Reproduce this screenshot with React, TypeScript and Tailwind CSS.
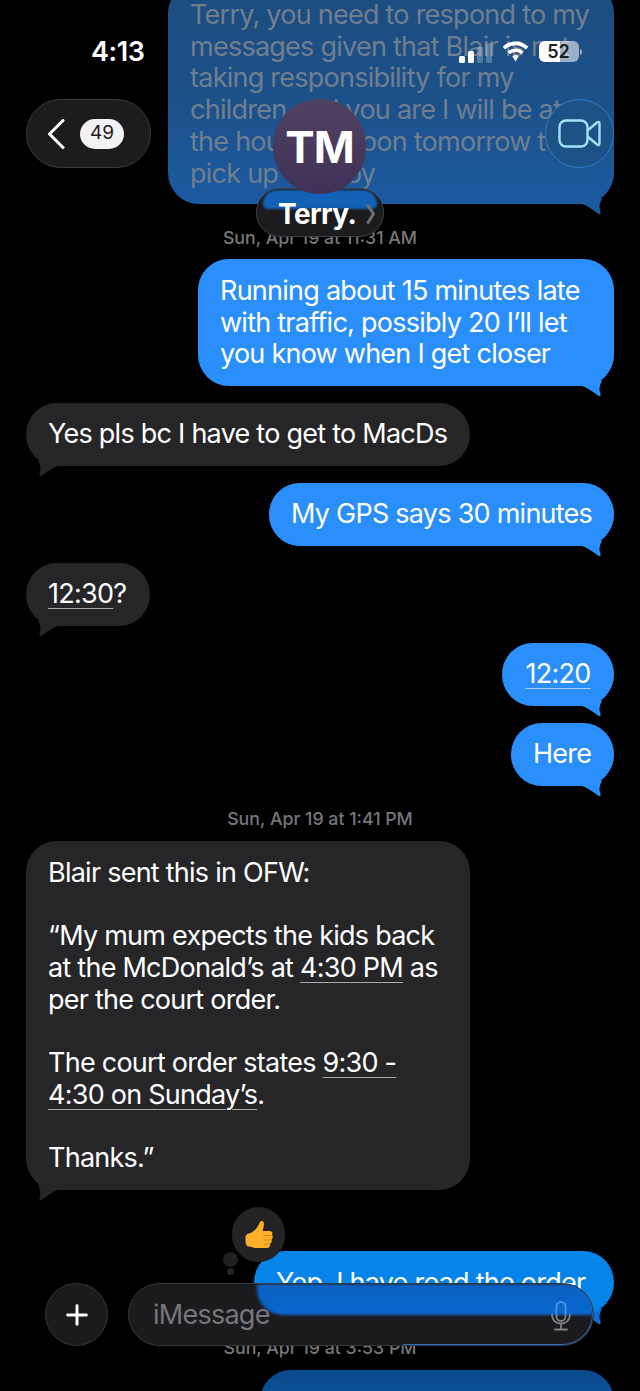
import type { ReactNode } from 'react'
import { Plus } from 'lucide-react'

const BLUE = '#2b8ffb'
const GRAY = '#262629'

function Tail({ side, color }: { side: 'left' | 'right'; color: string }) {
  return (
    <svg
      width="40"
      height="22"
      viewBox="0 0 40 22"
      className={side === 'right' ? 'absolute right-0 bottom-[-11px]' : 'absolute left-0 bottom-[-11px] -scale-x-100'}
    >
      <path d="M4 8 L8 11 C14 13 19 17 24 20.5 Q27 22.5 26.5 19 C25 15 25 11 28 6 L20 2 Z" fill={color} />
    </svg>
  )
}

function Bubble({
  side,
  width,
  children,
  tailColor,
  className,
}: {
  side: 'left' | 'right'
  width: string
  children: ReactNode
  tailColor?: string
  className?: string
}) {
  const bg = side === 'right' ? 'bg-[#2b8ffb]' : 'bg-[#262629]'
  return (
    <div className={`relative ${width} ${side === 'right' ? 'self-end' : 'self-start'}`}>
      <Tail side={side} color={tailColor ?? (side === 'right' ? BLUE : GRAY)} />
      <div
        className={`relative whitespace-pre rounded-[31px] px-[22px] py-[15.75px] text-[27px] leading-[31.75px] tracking-[-0.75px] text-white ${className ?? bg}`}
      >
        {children}
      </div>
    </div>
  )
}

function Link({ children }: { children: ReactNode }) {
  return <span className="underline decoration-white/60 decoration-1 underline-offset-[5px]">{children}</span>
}

function Stamp({ children, className }: { children: ReactNode; className: string }) {
  return <p className={`text-center text-[17.75px] leading-[22px] font-medium text-[#77777b] ${className}`}>{children}</p>
}

function StatusBar() {
  return (
    <>
      <span className="absolute left-[91px] top-[36px] text-[27px] leading-[32px] font-semibold tracking-[-0.4px] text-white">
        4:13
      </span>
      <div className="absolute left-[459px] top-[41px] flex items-start gap-[10px]">
        <div className="mt-px flex h-[21px] items-end gap-[3.5px]">
          <span className="h-[7px] w-[5.5px] rounded-[1.5px] bg-white" />
          <span className="h-[12px] w-[5.5px] rounded-[1.5px] bg-white" />
          <span className="h-[16px] w-[5.5px] rounded-[1.5px] bg-white/25" />
          <span className="h-[20px] w-[5.5px] rounded-[1.5px] bg-white/25" />
        </div>
        <svg width="27" height="21" viewBox="0 0 27 21">
          <path
            d="M13.5 0.5C8.5 0.5 4 2.5 0.7 5.8L3.2 8.5C5.9 5.8 9.5 4.2 13.5 4.2C17.5 4.2 21.1 5.8 23.8 8.5L26.3 5.8C23 2.5 18.5 0.5 13.5 0.5Z"
            fill="white"
          />
          <path
            d="M13.5 7.4C10.4 7.4 7.6 8.6 5.6 10.7L8 13.2C9.5 11.8 11.4 11 13.5 11C15.6 11 17.5 11.8 19 13.2L21.4 10.7C19.4 8.6 16.6 7.4 13.5 7.4Z"
            fill="white"
          />
          <path d="M13.5 14C12.2 14 11.1 14.5 10.3 15.3L13.5 20.5L16.7 15.3C15.9 14.5 14.8 14 13.5 14Z" fill="white" />
        </svg>
        <div className="relative flex h-[21px] w-[40px] items-center justify-center overflow-hidden rounded-[6px] bg-white/55">
          <span className="absolute inset-y-0 left-0 w-[21px] bg-white" />
          <span className="relative text-[18px] leading-none font-semibold text-[#1d1d20]">52</span>
        </div>
      </div>
      <span className="absolute left-[580px] top-[49px] h-[6px] w-[2px] rounded-r-full bg-white/50" />
    </>
  )
}

function Header() {
  return (
    <>
      <StatusBar />
      <div className="absolute left-[26px] top-[99px] flex h-[69px] w-[125px] items-center gap-[15px] rounded-full border border-[#3a3a3c] bg-[#1c1c1e] pl-[20px]">
        <svg width="18" height="30" viewBox="0 0 18 30" fill="none">
          <path d="M16 1.5L2.5 15L16 28.5" stroke="white" strokeWidth="3" strokeLinecap="round" strokeLinejoin="round" />
        </svg>
        <span className="flex h-[30px] w-[44px] items-center justify-center rounded-full bg-[#f2f2f4] text-[19px] text-[#1c1c1e]">
          49
        </span>
      </div>

      <div className="absolute left-[256px] top-[188px] flex h-[49px] w-[128px] items-center overflow-hidden rounded-[24px] border border-[#3f3f42] bg-[#1c1c1e] pl-[21px]">
        <span className="absolute inset-x-[6px] top-px h-[19px] rounded-t-[16px] rounded-b-[6px] bg-[#1462b8] blur-[1px]" />
        <span className="relative mt-[3px] text-[28px] leading-[32px] font-bold tracking-[-0.6px] text-white">Terry.</span>
        <svg width="10" height="20" viewBox="0 0 10 20" fill="none" className="relative ml-[10px] mt-[3px]">
          <path d="M2 1.5L7.5 10L2 18.5" stroke="#6e6e72" strokeWidth="3" strokeLinecap="round" strokeLinejoin="round" />
        </svg>
      </div>
      <div className="absolute left-[273px] top-[99px] flex h-[95px] w-[93px] items-center justify-center rounded-full bg-gradient-to-b from-[#4f4260] to-[#403157]">
        <span className="text-[44px] leading-none font-bold tracking-[-1px] text-white">TM</span>
      </div>

      <div className="absolute left-[545px] top-[99px] flex h-[69px] w-[69px] items-center justify-center rounded-full border border-[#2f7cc4] bg-[#1c5285]">
        <svg width="43" height="29" viewBox="0 0 43 29" fill="none" stroke="#9fe3f8" strokeWidth="2.4" strokeLinejoin="round">
          <rect x="1.5" y="1.5" width="28" height="26" rx="6.5" />
          <path d="M29.5 11.5L39 3.5Q41.5 2 41.5 5V24Q41.5 27 39 25.5L29.5 17.5" />
        </svg>
      </div>
    </>
  )
}

function Composer() {
  return (
    <>
      <div className="absolute left-[45px] top-[1283px] flex h-[63px] w-[63px] items-center justify-center rounded-full border border-[#343436] bg-[#1b1b1d]">
        <Plus size={32} strokeWidth={2.2} color="white" />
      </div>
      <div className="absolute left-[128px] top-[1283px] flex h-[63px] w-[466px] items-center overflow-hidden rounded-full border border-[#38383a] bg-[#1b1b1d] pl-[24px]">
        <span className="absolute left-[128px] right-0 top-0 h-[31px] rounded-bl-[26px] bg-gradient-to-b from-[#0a60c0] to-[#0a68d0] blur-[1.5px]" />
        <span className="absolute bottom-0 right-0 h-full w-[190px] rounded-r-full border-r border-b border-[#2a6fc0]" />
        <span className="relative text-[27px] leading-[32px] tracking-[-0.75px] text-[#77777b]">iMessage</span>
        <svg width="22" height="30" viewBox="0 0 22 30" fill="none" strokeWidth="1.8" strokeLinecap="round" className="absolute right-[21px] top-[17px]">
          <defs>
            <linearGradient id="mic" x1="0" y1="0" x2="0" y2="30" gradientUnits="userSpaceOnUse">
              <stop offset="0.45" stopColor="#4f93dd" />
              <stop offset="0.45" stopColor="#808084" />
            </linearGradient>
          </defs>
          <rect x="6.5" y="1" width="9" height="19" rx="4.5" stroke="url(#mic)" />
          <path d="M2 13.5C2 19 6 22.5 11 22.5C16 22.5 20 19 20 13.5M11 22.5V28.5M5 28.5H17" stroke="url(#mic)" />
        </svg>
      </div>
    </>
  )
}

function Tapback() {
  return (
    <>
      <span className="absolute left-[223px] top-[1252px] h-[15px] w-[15px] rounded-full bg-[#1f1f21]" />
      <span className="absolute left-[227px] top-[1268px] h-[7px] w-[7px] rounded-full bg-[#262628]" />
      <div className="absolute left-[232px] top-[1207px] flex h-[55px] w-[53px] items-center justify-center rounded-full bg-[#232325]">
        <svg width="28" height="30" viewBox="0 0 28 30">
          <path
            d="M0.5 17.5C0.5 14.5 3 13.5 5.5 13C9 11.5 12.5 8 14.5 3C15 1 18 0 18.8 3C19.3 6 18 9 17.5 11H24.5C27.5 11 28 13.5 27 15C28.2 16.5 28 18.5 26.5 19.5C27.3 21.5 26.5 23 25 23.7C25.5 26 24.5 28 22 28H12C8 28 7 26.5 4 26.5C1.5 26.5 0.5 24 0.5 21Z"
            fill="#fbb02a"
          />
          <path d="M18 15.5H26.5M18 20H26M18.5 24H24.5" stroke="#e2861a" strokeWidth="1.2" fill="none" />
        </svg>
      </div>
    </>
  )
}

export default function App() {
  return (
    <div
      className="relative h-[1391px] w-[640px] overflow-hidden bg-black"
      style={{ fontFamily: 'Inter, "Noto Sans", sans-serif' }}
    >
      <main className="flex flex-col px-[26px] pt-0">
        <div className="-mt-[18px] w-[446px] self-end">
          <Bubble side="right" width="w-full" tailColor="#1f5a9c" className="bg-gradient-to-b from-[#1d4d7f] via-[#1c5088] to-[#1c5aa0]">
            <span className="relative top-px text-[#6f7f8f]">
              {'Terry, you need to respond to my\nmessages given that Blair is not\ntaking responsibility for my\nchildren and you are I will be at\nthe house at noon tomorrow to\npick up the boy'}
            </span>
          </Bubble>
        </div>
        <Stamp className="mt-[23px] mb-[10px]">Sun, Apr 19 at 11:31 AM</Stamp>
        <Bubble side="right" width="w-[416px]">
          {'Running about 15 minutes late\nwith traffic, possibly 20 I’ll let\nyou know when I get closer'}
        </Bubble>
        <div className="mt-[16.75px]" />
        <Bubble side="left" width="w-[444px]">Yes pls bc I have to get to MacDs</Bubble>
        <div className="mt-[16.75px]" />
        <Bubble side="right" width="w-[345px]">My GPS says 30 minutes</Bubble>
        <div className="mt-[16.75px]" />
        <Bubble side="left" width="w-[124px]">
          <Link>12:30</Link>?
        </Bubble>
        <div className="mt-[16.75px]" />
        <Bubble side="right" width="w-[112px]" className="bg-[#2b8ffb] text-center">
          <Link>12:20</Link>
        </Bubble>
        <div className="mt-[16.75px]" />
        <Bubble side="right" width="w-[103px]">Here</Bubble>
        <Stamp className="mt-[22px] mb-[11px]">Sun, Apr 19 at 1:41 PM</Stamp>
        <Bubble side="left" width="w-[444px]">
          {'Blair sent this in OFW:\n\n“My mum expects the kids back\nat the McDonald’s at '}
          <Link>4:30 PM</Link>
          {' as\nper the court order.\n\nThe court order states '}
          <Link>9:30 -</Link>
          {'\n'}
          <Link>4:30 on Sunday’s</Link>
          {'.\n\nThanks.”'}
        </Bubble>
        <div className="mt-[61px]" />
        <Bubble side="right" width="w-[360px]" tailColor="#0a6fd6" className="bg-[#0784ea]">
          Yep, I have read the order
        </Bubble>
        <Stamp className="mt-[23px] mb-[11px]">Sun, Apr 19 at 3:53 PM</Stamp>
        <div className="h-[63px] w-[354px] self-end rounded-[31px] bg-gradient-to-b from-[#0a4a8c] to-[#0a5aa8]" />
      </main>
      <Tapback />
      <Header />
      <Composer />
    </div>
  )
}
